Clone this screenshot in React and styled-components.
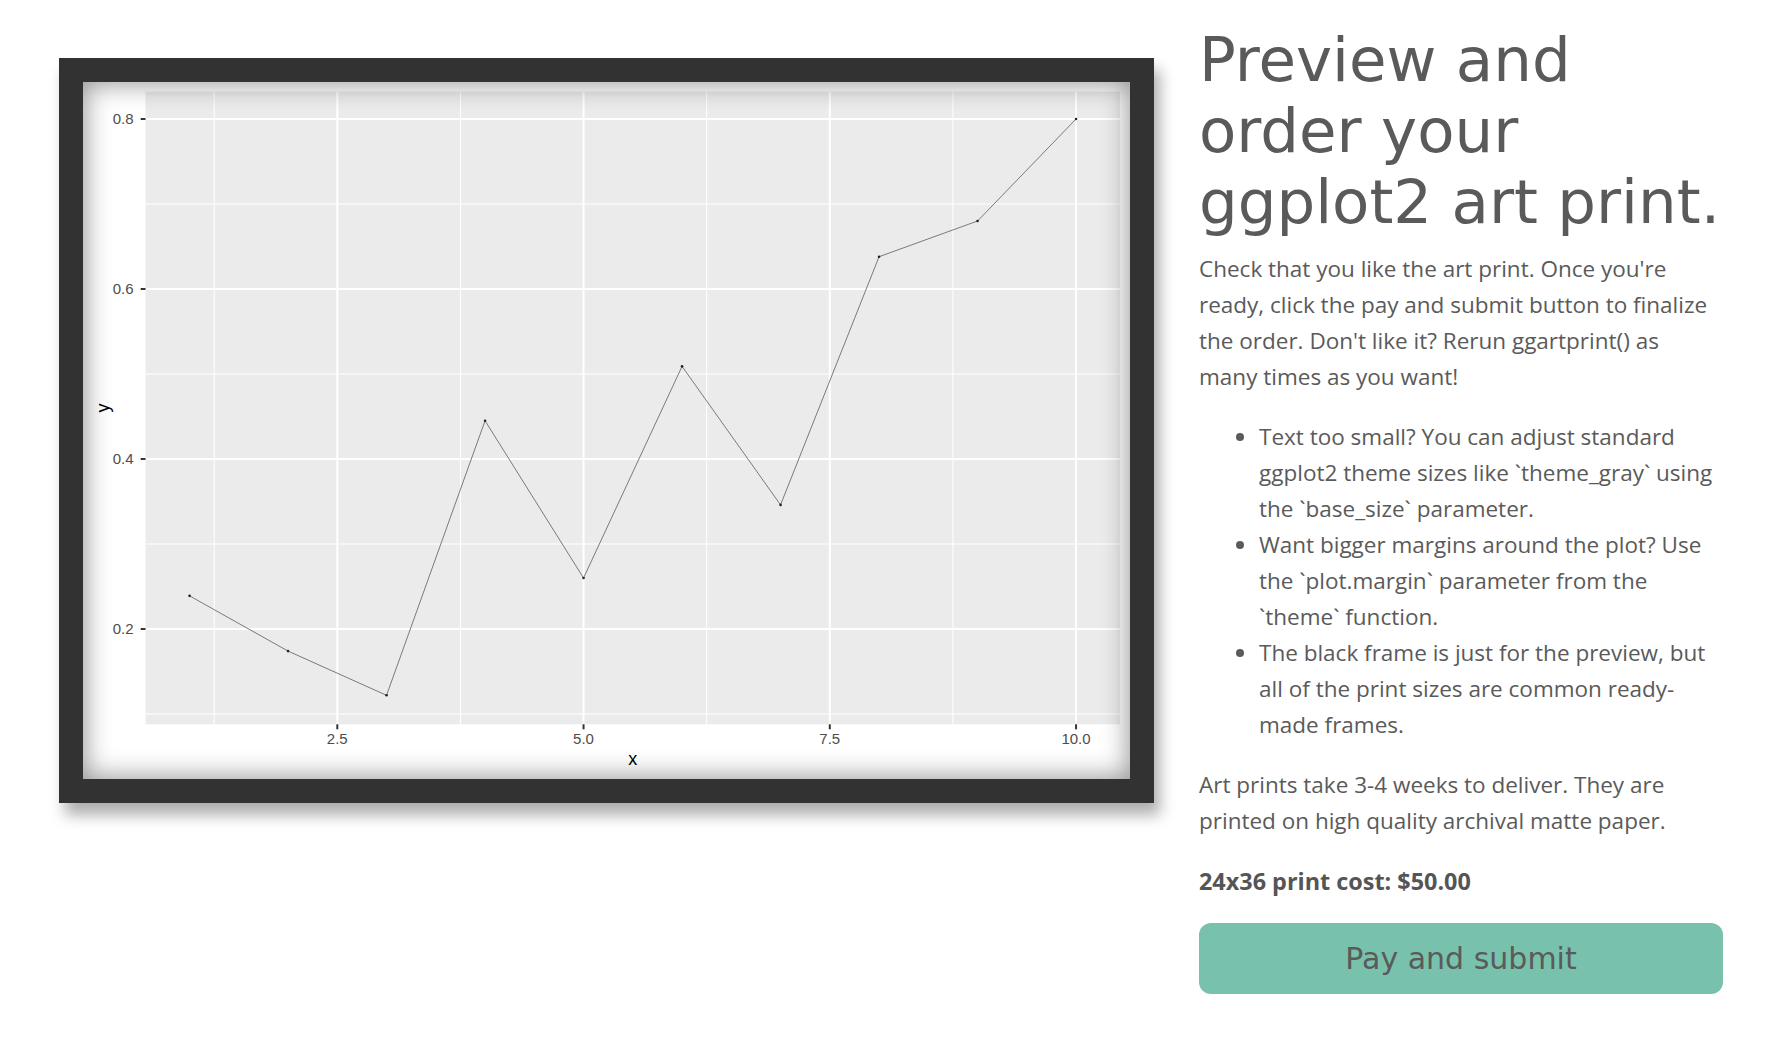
import React from "react";
import styled, { createGlobalStyle } from "styled-components";

const GlobalStyle = createGlobalStyle`
  html, body { margin: 0; padding: 0; background: #ffffff; }
  body { font-family: "Open Sans", "Noto Sans", sans-serif; color: #5a5a5a; }
`;

const Page = styled.div`
  display: flex;
  align-items: flex-start;
  gap: 45px;
  padding: 24px 61px 0 59px;
  width: 1784px;
  box-sizing: border-box;
`;

const PreviewColumn = styled.div`
  padding-top: 34px;
  flex: 0 0 auto;
`;

const Frame = styled.div`
  width: 1095px;
  height: 745px;
  box-sizing: border-box;
  padding: 24px;
  background: #323232;
  box-shadow: 6px 12px 14px rgba(0, 0, 0, 0.32);
`;

const Mat = styled.div`
  position: relative;
  width: 1047px;
  height: 697px;
  background: #ffffff;
  overflow: hidden;
  &::after {
    content: "";
    position: absolute;
    inset: 0;
    box-shadow: inset 0 0 26px 2px rgba(0, 0, 0, 0.42);
    pointer-events: none;
  }
`;

const PlotSvg = styled.svg`
  display: block;
`;

const InfoColumn = styled.div`
  flex: 0 0 524px;
  width: 524px;
`;

const Title = styled.h1`
  margin: 0 0 14px 0;
  font-family: "DejaVu Sans", "Noto Sans", sans-serif;
  font-weight: 400;
  font-size: 61px;
  line-height: 71px;
  color: #5a5a5a;
`;

const Paragraph = styled.p`
  margin: 0 0 24px 0;
  font-size: 22.5px;
  line-height: 36px;
  color: #5a5a5a;
  white-space: nowrap;
`;

const TipList = styled.ul`
  margin: 0 0 24px 0;
  padding-left: 60px;
  font-size: 22.5px;
  line-height: 36px;
  color: #5a5a5a;
  white-space: nowrap;
`;

const Tip = styled.li`
  padding-left: 0;
`;

const Cost = styled.p`
  margin: 0 0 24px 0;
  font-size: 23.4px;
  line-height: 36px;
  font-weight: 700;
  color: #555555;
`;

const PayButton = styled.button`
  display: block;
  width: 524px;
  height: 71px;
  border: none;
  border-radius: 12px;
  background: #78c2ad;
  color: #5a5a5a;
  font-family: "DejaVu Sans", "Noto Sans", sans-serif;
  font-size: 30px;
  font-weight: 400;
  cursor: pointer;
`;

const xs = (v) => 254.3 + (v - 2.5) * 98.5;
const ys = (v) => 37 + (0.8 - v) * 850;

const data = [0.239, 0.174, 0.122, 0.445, 0.26, 0.509, 0.346, 0.638, 0.68, 0.8];

const PANEL = { x0: 62.5, x1: 1037, y0: 9.7, y1: 642.3 };

function Plot() {
  const majorX = [2.5, 5, 7.5, 10];
  const minorX = [1.25, 3.75, 6.25, 8.75];
  const majorY = [0.2, 0.4, 0.6, 0.8];
  const minorY = [0.1, 0.3, 0.5, 0.7];
  const pts = data.map((v, i) => `${xs(i + 1)},${ys(v)}`).join(" ");
  return (
    <PlotSvg width="1047" height="697" viewBox="0 0 1047 697">
      <rect
        x={PANEL.x0}
        y={PANEL.y0}
        width={PANEL.x1 - PANEL.x0}
        height={PANEL.y1 - PANEL.y0}
        fill="#EBEBEB"
      />
      {minorY.map((v) => (
        <line key={"my" + v} x1={PANEL.x0} x2={PANEL.x1} y1={ys(v)} y2={ys(v)} stroke="#FFFFFF" strokeWidth="1" />
      ))}
      {minorX.map((v) => (
        <line key={"mx" + v} x1={xs(v)} x2={xs(v)} y1={PANEL.y0} y2={PANEL.y1} stroke="#FFFFFF" strokeWidth="1" />
      ))}
      {majorY.map((v) => (
        <line key={"Y" + v} x1={PANEL.x0} x2={PANEL.x1} y1={ys(v)} y2={ys(v)} stroke="#FFFFFF" strokeWidth="2" />
      ))}
      {majorX.map((v) => (
        <line key={"X" + v} x1={xs(v)} x2={xs(v)} y1={PANEL.y0} y2={PANEL.y1} stroke="#FFFFFF" strokeWidth="2" />
      ))}
      <polyline points={pts} fill="none" stroke="#7a7a7a" strokeWidth="1" />
      {data.map((v, i) => (
        <circle key={"p" + i} cx={xs(i + 1)} cy={ys(v)} r="1.3" fill="#222" />
      ))}
      {majorY.map((v) => (
        <g key={"ty" + v}>
          <line x1={57.7} x2={PANEL.x0} y1={ys(v)} y2={ys(v)} stroke="#333" strokeWidth="2" />
          <text
            x={50.5}
            y={ys(v) + 5.4}
            textAnchor="end"
            fontFamily="'Liberation Sans', Arial, sans-serif"
            fontSize="15"
            fill="#4D4D4D"
          >
            {v.toFixed(1)}
          </text>
        </g>
      ))}
      {majorX.map((v) => (
        <g key={"tx" + v}>
          <line x1={xs(v)} x2={xs(v)} y1={PANEL.y1} y2={PANEL.y1 + 5} stroke="#333" strokeWidth="2" />
          <text
            x={xs(v)}
            y={662}
            textAnchor="middle"
            fontFamily="'Liberation Sans', Arial, sans-serif"
            fontSize="15"
            fill="#4D4D4D"
          >
            {v.toFixed(1)}
          </text>
        </g>
      ))}
      <text
        x={(PANEL.x0 + PANEL.x1) / 2}
        y={683}
        textAnchor="middle"
        fontFamily="'Liberation Sans', Arial, sans-serif"
        fontSize="18"
        fill="#000"
      >
        x
      </text>
      <text
        x={0}
        y={0}
        transform={`translate(25.5, ${(PANEL.y0 + PANEL.y1) / 2}) rotate(-90)`}
        textAnchor="middle"
        fontFamily="'Liberation Sans', Arial, sans-serif"
        fontSize="18"
        fill="#000"
      >
        y
      </text>
    </PlotSvg>
  );
}

export default function App() {
  return (
    <>
      <GlobalStyle />
      <Page>
        <PreviewColumn>
          <Frame>
            <Mat>
              <Plot />
            </Mat>
          </Frame>
        </PreviewColumn>
        <InfoColumn>
          <Title>Preview and order your ggplot2 art print.</Title>
          <Paragraph>
            Check that you like the art print. Once you're
            <br />
            ready, click the pay and submit button to finalize
            <br />
            the order. Don't like it? Rerun ggartprint() as
            <br />
            many times as you want!
          </Paragraph>
          <TipList>
            <Tip>
              Text too small? You can adjust standard
              <br />
              ggplot2 theme sizes like `theme_gray` using
              <br />
              the `base_size` parameter.
            </Tip>
            <Tip>
              Want bigger margins around the plot? Use
              <br />
              the `plot.margin` parameter from the
              <br />
              `theme` function.
            </Tip>
            <Tip>
              The black frame is just for the preview, but
              <br />
              all of the print sizes are common ready-
              <br />
              made frames.
            </Tip>
          </TipList>
          <Paragraph>
            Art prints take 3-4 weeks to deliver. They are
            <br />
            printed on high quality archival matte paper.
          </Paragraph>
          <Cost>24x36 print cost: $50.00</Cost>
          <PayButton>Pay and submit</PayButton>
        </InfoColumn>
      </Page>
    </>
  );
}
